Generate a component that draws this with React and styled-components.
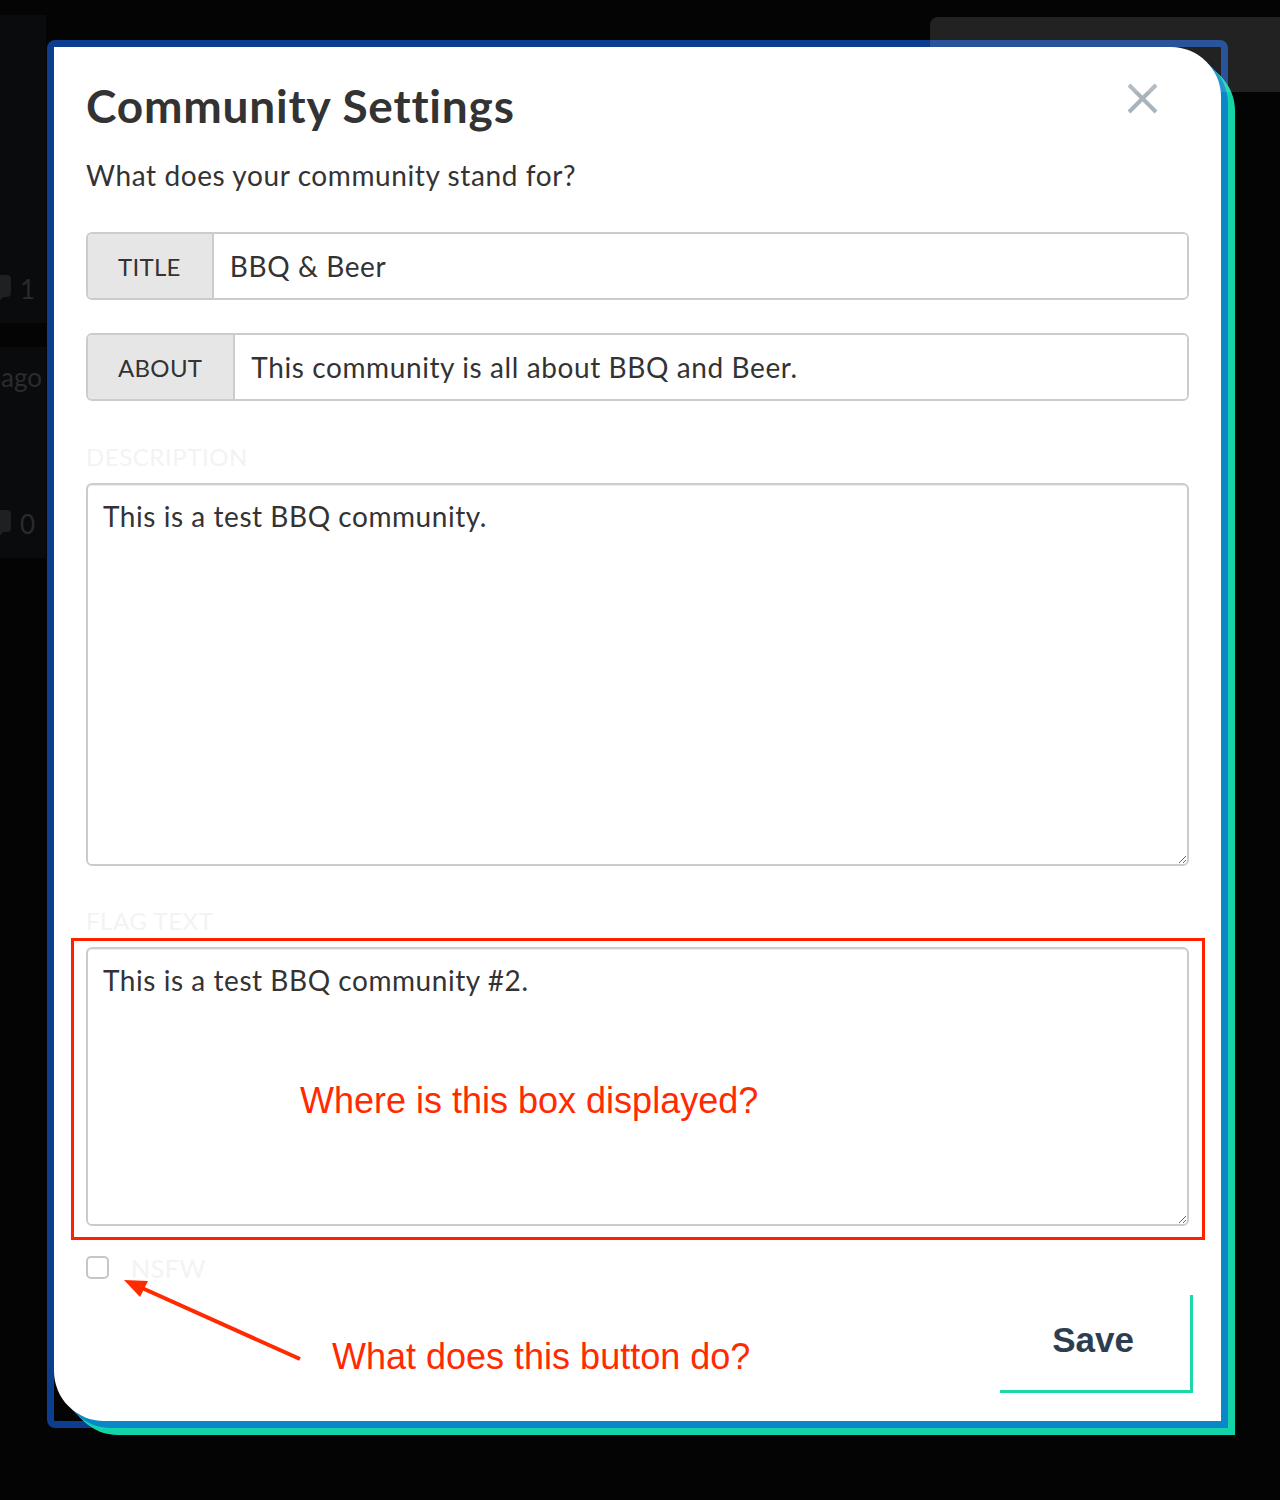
import React from 'react';
import styled, { createGlobalStyle } from 'styled-components';

const GlobalStyle = createGlobalStyle`
  html, body {
    margin: 0;
    padding: 0;
    background: #040404;
  }
  * {
    box-sizing: border-box;
  }
`

// Page + faded feed behind the modal
const Page = styled.div`
  position: relative;
  width: 1280px;
  height: 1500px;
  overflow: hidden;
  background: #040404;
  font-family: Lato, "Open Sans", sans-serif;
`
const Feed = styled.div`
  display: flex;
  flex-direction: column;
  width: 46px;
  padding-top: 15px;
`
const FeedRow = styled.div`
  height: ${props => props.h}px;
  background: #0a0b0d;
  margin-bottom: 24px;
  display: flex;
  flex-direction: column;
  justify-content: space-between;
  align-items: flex-end;
  padding: ${props => props.pad};
  color: #2a2b2d;
  font-size: 26px;
`
const Meta = styled.span`
  display: flex;
  align-items: center;
  gap: 9px;
  margin-right: ${props => props.mr || 0}px;
  & svg {
    display: block;
  }
`
const TopPanel = styled.div`
  position: absolute;
  left: 930px;
  top: 17px;
  width: 360px;
  height: 75px;
  border-radius: 8px 0 0 0;
  background: rgba(255, 255, 255, 0.12);
  pointer-events: none;
`

// Modal
const Overlay = styled.div`
  position: absolute;
  inset: 0;
  padding: 40px 0 0 47px;
`
const Frame = styled.div`
  width: 1181px;
  border: 7px solid #0c3d8e;
  border-radius: 8px;
`
const Card = styled.div`
  position: relative;
  background: #fff;
  border-radius: 0 50px 0 50px;
  box-shadow: 7px 7px 0 #0a87c9, 14px 14px 0 #13d4a9;
  padding: 31px 32px 28px;
  display: flex;
  flex-direction: column;
  color: #333;
  letter-spacing: 0.55px;
`
const Header = styled.div`
  display: flex;
  justify-content: space-between;
  align-items: flex-start;
`
const Title = styled.h2`
  margin: 0;
  font-size: 46px;
  line-height: 56px;
  font-weight: 700;
  letter-spacing: 0.8px;
  color: #333;
`
const CloseButton = styled.button`
  border: none;
  background: transparent;
  padding: 0;
  margin: 5px 31px 0 0;
  width: 31px;
  height: 31px;
  cursor: pointer;
  & svg {
    display: block;
  }
`
const Subtitle = styled.p`
  margin: 21px 0 0;
  font-size: 28px;
  line-height: 40px;
  letter-spacing: 0.6px;
`
const InputGroup = styled.div`
  display: flex;
  height: 68px;
  margin-top: ${props => props.mt}px;
  border: 2px solid #ccc;
  border-radius: 6px;
  overflow: hidden;
`
const Addon = styled.span`
  display: flex;
  align-items: center;
  padding: 0 31px 0 30px;
  background: #e6e6e6;
  border-right: 2px solid #ccc;
  font-size: 24px;
  letter-spacing: 0.3px;
  text-transform: uppercase;
  color: #333;
`
const TextInput = styled.input`
  flex: 1;
  border: none;
  outline: none;
  padding: 0 16px;
  font-family: inherit;
  font-size: 28px;
  letter-spacing: 0.6px;
  color: #333;
  background: #fff;
`
const FieldLabel = styled.label`
  display: block;
  margin-top: ${props => props.mt}px;
  font-size: 24px;
  line-height: 32px;
  text-transform: uppercase;
  color: #f3f3f3;
`
const TextArea = styled.textarea`
  display: block;
  width: 100%;
  height: ${props => props.h}px;
  margin-top: ${props => props.mt || 0}px;
  padding: 11px 15px;
  border: 2px solid #ccc;
  border-radius: 6px;
  box-shadow: inset 0 1px 1px rgba(0, 0, 0, 0.075);
  font-family: inherit;
  font-size: 28px;
  line-height: 40px;
  letter-spacing: 0.55px;
  color: #333;
  background: #fff;
  outline: none;
  resize: vertical;
`

// Annotations
const Highlight = styled.div`
  position: relative;
  margin: 1px -16px 0 -15px;
  padding: 6px 13px 11px 12px;
  border: 3px solid #ff2200;
`
const Note = styled.span`
  font-family: "Liberation Sans", Arial, sans-serif;
  font-size: 36px;
  line-height: 40px;
  letter-spacing: 0;
  color: #ff2a00;
  white-space: nowrap;
`
const FloatingNote = styled(Note)`
  position: absolute;
  left: 226px;
  top: 140px;
`
const Arrow = styled.svg`
  position: absolute;
  left: 66px;
  top: 1227px;
  overflow: visible;
`

const CheckRow = styled.label`
  display: flex;
  align-items: center;
  gap: 22px;
  height: 23px;
  margin-top: 16px;
  font-size: 25px;
  color: #f3f3f3;
`
const Checkbox = styled.input`
  appearance: none;
  margin: 0;
  width: 23px;
  height: 23px;
  border: 2px solid #c6c6c6;
  border-radius: 5px;
  background: #fff;
`
const Footer = styled.div`
  display: flex;
  justify-content: space-between;
  align-items: flex-start;
  margin-top: 16px;
`
const FooterNote = styled(Note)`
  margin: 42px 0 0 246px;
`
const SaveButton = styled.button`
  width: 193px;
  height: 98px;
  margin-right: -4px;
  padding: 0 4px 6px 0;
  border: none;
  border-right: 3px solid #1fd6a9;
  border-bottom: 3px solid #1fd6a9;
  background: #fff;
  font-family: "Liberation Sans", Arial, sans-serif;
  font-size: 35px;
  font-weight: 700;
  color: #2c3e50;
  cursor: pointer;
`

const CommentIcon = () => (
  <svg width="13" height="28" viewBox="0 0 13 28">
    <path d="M-8 0 H9 a4 4 0 0 1 4 4 V18 a4 4 0 0 1 -4 4 H5 L0 28 V22 H-8 Z" fill="#1f2022" />
  </svg>
)

const App = () => {
  return (
    <Page>
      <GlobalStyle />

      <Feed>
        <FeedRow h={308} pad="0 11px 18px 0">
          <span />
          <Meta><CommentIcon />1</Meta>
        </FeedRow>
        <FeedRow h={211} pad="14px 4px 18px 0">
          <Meta>ago</Meta>
          <Meta mr={7}><CommentIcon />0</Meta>
        </FeedRow>
      </Feed>

      <Overlay>
        <Frame>
          <Card>
            <Header>
              <Title>Community Settings</Title>
              <CloseButton aria-label="Close">
                <svg width="31" height="31" viewBox="0 0 31 31">
                  <path d="M2 2 L29 29 M29 2 L2 29" stroke="#a9b3ba" strokeWidth="4" />
                </svg>
              </CloseButton>
            </Header>
            <Subtitle>What does your community stand for?</Subtitle>

            <InputGroup mt={37}>
              <Addon>Title</Addon>
              <TextInput defaultValue="BBQ & Beer" />
            </InputGroup>

            <InputGroup mt={33}>
              <Addon>About</Addon>
              <TextInput defaultValue="This community is all about BBQ and Beer." />
            </InputGroup>

            <FieldLabel mt={40}>Description</FieldLabel>
            <TextArea mt={10} h={383} defaultValue="This is a test BBQ community." />

            <FieldLabel mt={39}>Flag Text</FieldLabel>
            <Highlight>
              <TextArea h={279} defaultValue="This is a test BBQ community #2." />
              <FloatingNote>Where is this box displayed?</FloatingNote>
            </Highlight>

            <CheckRow>
              <Checkbox type="checkbox" />
              NSFW
            </CheckRow>

            <Footer>
              <FooterNote>What does this button do?</FooterNote>
              <SaveButton>Save</SaveButton>
            </Footer>

            <Arrow width="185" height="90" viewBox="0 0 185 90">
              <line x1="180" y1="85" x2="22" y2="14" stroke="#ff2a00" strokeWidth="4" />
              <polygon points="4,6 28,7 20,23" fill="#ff2a00" />
            </Arrow>
          </Card>
        </Frame>
      </Overlay>

      <TopPanel />
    </Page>
  )
}

export default App
